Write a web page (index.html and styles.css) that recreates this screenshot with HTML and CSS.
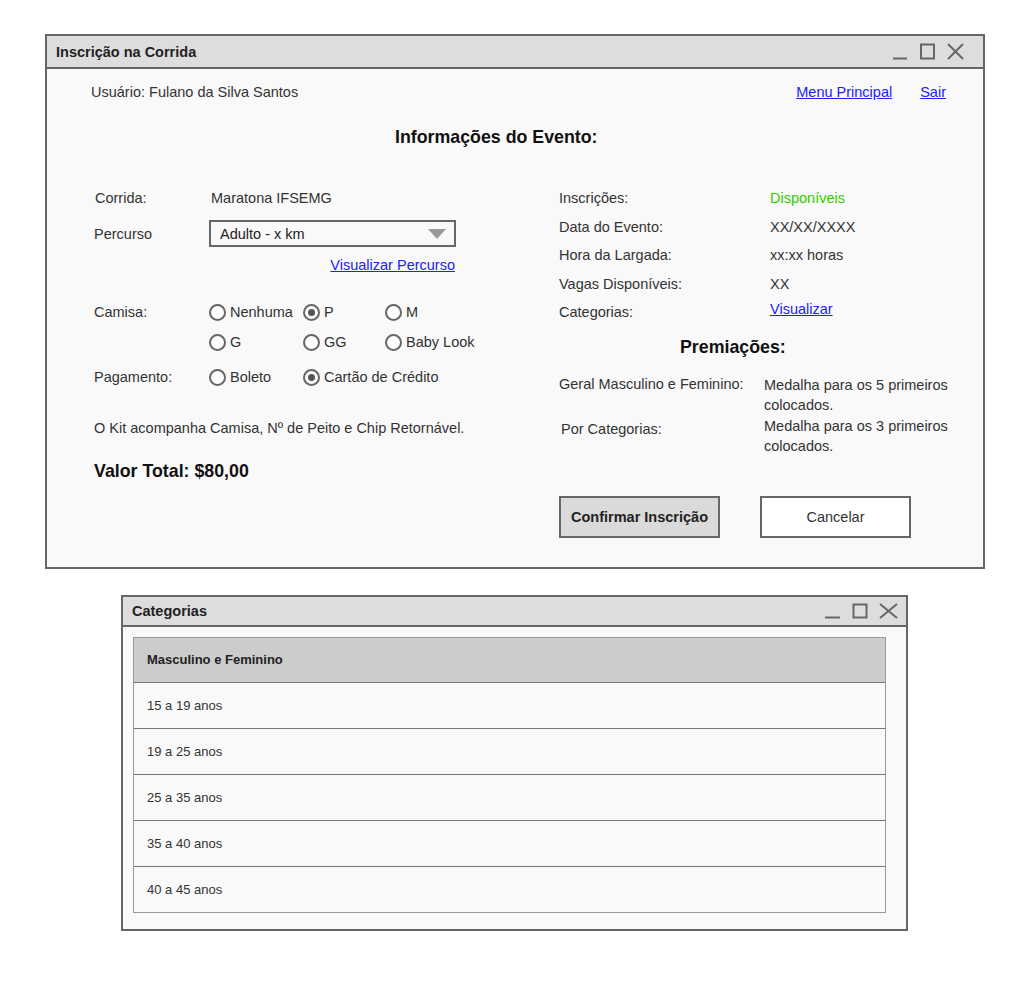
FILE: index.html
```html
<!DOCTYPE html>
<html lang="pt-BR">
<head>
<meta charset="utf-8">
<title>Inscrição na Corrida</title>
<link rel="stylesheet" href="styles.css">
</head>
<body>
<div class="window main-window">
  <div class="titlebar">
    <span class="title">Inscrição na Corrida</span>
    <svg class="controls" width="72" height="17" viewBox="0 0 72 17" aria-hidden="true">
      <line x1="1" y1="15.5" x2="15" y2="15.5"/>
      <rect x="29" y="1.5" width="13" height="14"/>
      <line x1="56" y1="1" x2="71" y2="16"/>
      <line x1="71" y1="1" x2="56" y2="16"/>
    </svg>
  </div>
  <div class="content">
    <div class="topbar">
      <span class="user">Usuário: Fulano da Silva Santos</span>
      <nav class="links"><a href="#">Menu Principal</a><a href="#">Sair</a></nav>
    </div>
    <h1 class="heading">Informações do Evento:</h1>
    <div class="columns">
      <div class="col-left">
        <div class="row r-corrida"><span class="label">Corrida:</span><span class="value">Maratona IFSEMG</span></div>
        <div class="row r-percurso"><span class="label">Percurso</span>
          <div class="select"><span>Adulto - x km</span><span class="caret"></span></div>
        </div>
        <div class="link-row"><a href="#">Visualizar Percurso</a></div>
        <div class="row r-camisa"><span class="label">Camisa:</span>
          <div class="radios">
            <span class="radio s1"><span class="dot"></span>Nenhuma</span>
            <span class="radio s2 checked"><span class="dot"></span>P</span>
            <span class="radio"><span class="dot"></span>M</span>
          </div>
        </div>
        <div class="row r-camisa2"><span class="label"></span>
          <div class="radios">
            <span class="radio s1"><span class="dot"></span>G</span>
            <span class="radio s2"><span class="dot"></span>GG</span>
            <span class="radio"><span class="dot"></span>Baby Look</span>
          </div>
        </div>
        <div class="row r-pag"><span class="label">Pagamento:</span>
          <div class="radios">
            <span class="radio s1"><span class="dot"></span>Boleto</span>
            <span class="radio checked"><span class="dot"></span>Cartão de Crédito</span>
          </div>
        </div>
        <p class="kit">O Kit acompanha Camisa, Nº de Peito e Chip Retornável.</p>
        <p class="total">Valor Total: $80,00</p>
      </div>
      <div class="col-right">
        <div class="info"><span class="ilabel">Inscrições:</span><span class="ivalue green">Disponíveis</span></div>
        <div class="info"><span class="ilabel">Data do Evento:</span><span class="ivalue">XX/XX/XXXX</span></div>
        <div class="info"><span class="ilabel">Hora da Largada:</span><span class="ivalue">xx:xx horas</span></div>
        <div class="info"><span class="ilabel">Vagas Disponíveis:</span><span class="ivalue">XX</span></div>
        <div class="info cat"><span class="ilabel">Categorias:</span><a href="#" class="ivalue">Visualizar</a></div>
        <h2 class="subheading">Premiações:</h2>
        <div class="prize geral"><span class="plabel">Geral Masculino e Feminino:</span><span class="pvalue">Medalha para os 5 primeiros colocados.</span></div>
        <div class="prize porcat"><span class="plabel">Por Categorias:</span><span class="pvalue">Medalha para os 3 primeiros colocados.</span></div>
        <div class="buttons">
          <button class="btn primary">Confirmar Inscrição</button>
          <button class="btn secondary">Cancelar</button>
        </div>
      </div>
    </div>
  </div>
</div>

<div class="window cat-window">
  <div class="titlebar small">
    <span class="title">Categorias</span>
    <svg class="controls" width="75" height="17" viewBox="0 0 75 17" aria-hidden="true">
      <line x1="1" y1="14.5" x2="16" y2="14.5"/>
      <rect x="29.5" y="1.5" width="13" height="13"/>
      <line x1="56" y1="1" x2="73" y2="15"/>
      <line x1="73" y1="1" x2="56" y2="15"/>
    </svg>
  </div>
  <div class="content2">
    <div class="table">
      <div class="thead">Masculino e Feminino</div>
      <div class="trow">15 a 19 anos</div>
      <div class="trow">19 a 25 anos</div>
      <div class="trow">25 a 35 anos</div>
      <div class="trow">35 a 40 anos</div>
      <div class="trow">40 a 45 anos</div>
    </div>
  </div>
</div>
</body>
</html>
```

FILE: styles.css
```css
* { box-sizing: border-box; }
html, body { margin: 0; padding: 0; background: #ffffff; }
body {
  font-family: "Liberation Sans", Arial, sans-serif;
  font-size: 14.5px;
  color: #333333;
}
a { color: #2020ff; text-decoration: underline; }
h1, h2, p { margin: 0; font-weight: bold; }
p { font-weight: normal; }

.window {
  border: 2px solid #666666;
  background: #f9f9f9;
}
.main-window { width: 940px; margin: 34px 0 0 45px; }
.cat-window { width: 787px; margin: 26px 0 0 121px; }

.titlebar {
  height: 33px;
  background: #dddddd;
  border-bottom: 2px solid #666666;
  display: flex;
  align-items: center;
  justify-content: space-between;
  padding: 0 19px 0 9px;
}
.titlebar.small { height: 30px; padding-right: 7px; }
.title { font-weight: bold; color: #222222; font-size: 14.5px; }
.controls { display: block; }
.controls line, .controls rect { stroke: #666666; stroke-width: 2; fill: none; }

.content { padding: 11px 37px 29px 44px; }
.topbar { display: flex; justify-content: space-between; height: 24px; line-height: 24px; }
.links a { margin-left: 28px; }
.heading {
  margin-top: 22px;
  height: 22px;
  line-height: 22px;
  font-size: 17.8px;
  color: #111111;
  padding-left: 304px;
}
.columns { display: flex; margin-top: 36px; }
.col-left { width: 468px; flex: none; padding-left: 3px; }
.col-right { flex: 1; min-width: 0; }

.row { display: flex; align-items: center; }
.label { width: 115px; flex: none; }
.r-corrida { height: 28px; }
.r-corrida .label { padding-left: 1px; }
.r-corrida .value { padding-left: 2px; }
.r-percurso { margin-top: 8px; height: 27px; }
.select {
  width: 247px;
  height: 27px;
  border: 2px solid #666666;
  display: flex;
  align-items: center;
  justify-content: space-between;
  padding: 0 8px 0 9px;
  color: #222222;
}
.caret {
  width: 0; height: 0;
  border-left: 9.5px solid transparent;
  border-right: 9.5px solid transparent;
  border-top: 10px solid #999999;
}
.link-row { margin-top: 8px; height: 20px; line-height: 20px; width: 361px; text-align: right; }
.r-camisa { margin-top: 27px; height: 20px; }
.r-camisa2 { margin-top: 10px; height: 20px; }
.r-pag { margin-top: 15px; height: 20px; }
.radios { display: flex; align-items: center; }
.radio { display: inline-flex; align-items: center; gap: 4px; }
.radio.s1 { width: 94px; }
.radio.s2 { width: 82px; }
.dot {
  width: 17px; height: 17px;
  border: 2px solid #666666;
  border-radius: 50%;
  background: #ffffff;
  display: inline-flex;
  align-items: center;
  justify-content: center;
  flex: none;
}
.checked .dot::after {
  content: "";
  width: 7px; height: 7px;
  border-radius: 50%;
  background: #555555;
}
.kit { margin-top: 31px; height: 20px; line-height: 20px; }
.total { margin-top: 22px; height: 22px; line-height: 22px; font-size: 17.8px; font-weight: bold; color: #111111; }

.info { display: flex; height: 28.5px; line-height: 28.5px; }
.ilabel { width: 211px; flex: none; }
.green { color: #33cc00; }
.info.cat .ivalue { line-height: 22px; }
.subheading {
  margin-top: 9.5px;
  height: 22px;
  line-height: 22px;
  font-size: 17.8px;
  color: #111111;
  padding-left: 121px;
}
.prize { display: flex; align-items: flex-start; line-height: 20px; }
.plabel { width: 205px; flex: none; }
.pvalue { width: 192px; flex: none; }
.geral { margin-top: 16px; }
.geral .pvalue { margin-top: 1px; }
.porcat { margin-top: 1px; }
.porcat .plabel { margin-top: 3px; padding-left: 2px; }
.buttons { display: flex; gap: 40px; margin-top: 40px; }
.btn {
  height: 42px;
  border: 2px solid #666666;
  font-family: "Liberation Sans", Arial, sans-serif;
  font-size: 14.5px;
  color: #222222;
  padding: 0;
}
.btn.primary { width: 161px; background: #dadada; font-weight: bold; }
.btn.secondary { width: 151px; background: #ffffff; color: #333333; }

.content2 { padding: 10px 20px 16px 10px; }
.table { border: 1px solid #9a9a9a; }
.thead {
  height: 44px;
  line-height: 44px;
  background: #cccccc;
  font-weight: bold;
  font-size: 13px;
  color: #222222;
  padding-left: 13px;
}
.trow {
  height: 46px;
  line-height: 45px;
  border-top: 1px solid #777777;
  font-size: 13px;
  color: #333333;
  padding-left: 13px;
}
```
